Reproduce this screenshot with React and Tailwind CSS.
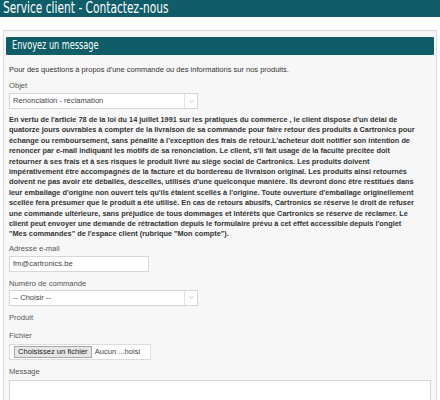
import { ChevronDown } from 'lucide-react'

const paragraph = [
  "En vertu de l'article 78 de la loi du 14 juillet 1991 sur les pratiques du commerce , le client dispose d'un délai de",
  'quatorze jours ouvrables à compter de la livraison de sa commande pour faire retour des produits à Cartronics pour',
  "échange ou remboursement, sans pénalité à l'exception des frais de retour.L'acheteur doit notifier son intention de",
  "renoncer par e-mail indiquant les motifs de sa renonciation. Le client, s'il fait usage de la faculté précitée doit",
  'retourner à ses frais et à ses risques le produit livré au siège social de Cartronics. Les produits doivent',
  'impérativement être accompagnés de la facture et du bordereau de livraison original. Les produits ainsi retournés',
  "doivent ne pas avoir été déballés, descellés, utilisés d'une quelconque manière. Ils devront donc être restitués dans",
  "leur emballage d'origine non ouvert tels qu'ils étaient scellés à l'origine. Toute ouverture d'emballage originellement",
  'scellée fera présumer que le produit a été utilisé. En cas de retours abusifs, Cartronics se réserve le droit de refuser',
  'une commande ultérieure, sans préjudice de tous dommages et intérêts que Cartronics se réserve de réclamer. Le',
  "client peut envoyer une demande de rétractation depuis le formulaire prévu à cet effet accessible depuis l'onglet",
  '"Mes commandes" de l\'espace client (rubrique "Mon compte").'
]

const Select = ({ value }) => (
  <div className="flex h-[16px] w-[189px] border border-[#d6d6d6] bg-white">
    <div className="flex-1 flex items-center pl-[3px] text-[7.6px] text-[#444]">{value}</div>
    <div className="w-[13px] border-l border-[#e2e2e2] flex items-center justify-center">
      <ChevronDown size={7} className="text-[#999]" strokeWidth={2} />
    </div>
  </div>
)

const Label = ({ children, className = '' }) => (
  <div className={`text-[7.6px] leading-[10px] text-[#555] ${className}`}>{children}</div>
)

export default function App() {
  return (
    <div className="w-[440px] h-[400px] overflow-hidden bg-white font-['Liberation_Sans',Arial,sans-serif]">
      {/* Header */}
      <div className="h-[17px] bg-[#0e5d68] flex items-center pl-[3px]">
        <span className="inline-block origin-left scale-x-[0.71] whitespace-nowrap text-white text-[15px] leading-none font-['DejaVu_Sans',sans-serif]">
          Service client - Contactez-nous
        </span>
      </div>

      {/* Panel */}
      <div className="mt-[13px] ml-[3px] w-[434px] h-[400px] border border-[#d3dcdc] bg-[#f7f7f7] px-[2px] pt-[6px]">
        <div className="h-[18px] bg-[#0e5d68] rounded-[1px] flex items-center pl-[6px]">
          <span className="inline-block origin-left scale-x-[0.71] whitespace-nowrap text-white text-[11.5px] leading-none font-['DejaVu_Sans',sans-serif]">
            Envoyez un message
          </span>
        </div>

        <div className="px-[3px] pt-[10px]">
          <div className="text-[7.5px] leading-[10px] text-[#333]">
            Pour des questions à propos d'une commande ou des informations sur nos produits.
          </div>

          <Label className="mt-[6px]">Objet</Label>
          <div className="mt-[2px]">
            <Select value="Renonciation - réclamation" />
          </div>

          <div className="mt-[6px] text-[7.35px] leading-[10.4px] font-bold text-[#333] whitespace-nowrap">
            {paragraph.map((line, i) => (
              <div key={i}>{line}</div>
            ))}
          </div>

          <Label className="mt-[4px]">Adresse e-mail</Label>
          <div className="mt-[2px] w-[140px] h-[16px] border border-[#d6d6d6] bg-white flex items-center pl-[3px] text-[7.6px] text-[#444]">
            fm@cartronics.be
          </div>

          <Label className="mt-[7px]">Numéro de commande</Label>
          <div className="mt-[1px]">
            <Select value="-- Choisir --" />
          </div>

          <Label className="mt-[7px]">Produit</Label>

          <Label className="mt-[8px]">Fichier</Label>
          <div className="mt-[3px] w-[142px] h-[16px] border border-[#dcdcdc] bg-white flex items-center pl-[4px] gap-[3px] whitespace-nowrap">
            <div className="h-[12px] px-[3px] bg-[#e6e6e6] border border-[#a9a9a9] flex items-center text-[7.6px] text-[#222]">
              Choisissez un fichier
            </div>
            <span className="text-[7.6px] text-[#444]">Aucun ...hoisi</span>
          </div>

          <Label className="mt-[7px]">Message</Label>
          <div className="mt-[3px] w-[422px] h-[40px] border border-[#d6d6d6] bg-white" />
        </div>
      </div>
    </div>
  )
}
